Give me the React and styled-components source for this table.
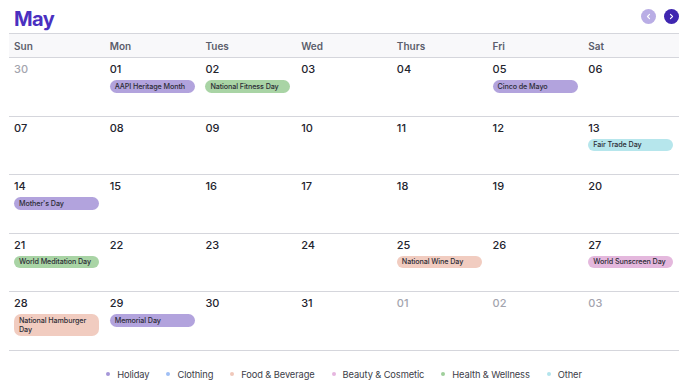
import React from "react";
import styled, { createGlobalStyle } from "styled-components";

const GlobalStyle = createGlobalStyle`
  body {
    margin: 0;
    background: #ffffff;
    font-family: Inter, "Noto Sans", sans-serif;
  }
`;

const colors = {
  holiday: "#b2a3dd",
  clothing: "#a9c6f3",
  food: "#f1ccc0",
  beauty: "#e4b8dd",
  health: "#a9d4a5",
  other: "#b6e6ec",
};

const legend = [
  { key: "holiday", label: "Holiday", dot: "#a596d8" },
  { key: "clothing", label: "Clothing", dot: "#9fbff5" },
  { key: "food", label: "Food & Beverage", dot: "#f0c8ba" },
  { key: "beauty", label: "Beauty & Cosmetic", dot: "#e6b6df" },
  { key: "health", label: "Health & Wellness", dot: "#9fcf9b" },
  { key: "other", label: "Other", dot: "#b3e4ec" },
];

const days = ["Sun", "Mon", "Tues", "Wed", "Thurs", "Fri", "Sat"];

// each day: [number, dimmed?, events]
const weeks = [
  [
    ["30", true],
    ["01", false, [["AAPI Heritage Month", "holiday"]]],
    ["02", false, [["National Fitness Day", "health"]]],
    ["03"],
    ["04"],
    ["05", false, [["Cinco de Mayo", "holiday"]]],
    ["06"],
  ],
  [
    ["07"],
    ["08"],
    ["09"],
    ["10"],
    ["11"],
    ["12"],
    ["13", false, [["Fair Trade Day", "other"]]],
  ],
  [
    ["14", false, [["Mother's Day", "holiday"]]],
    ["15"],
    ["16"],
    ["17"],
    ["18"],
    ["19"],
    ["20"],
  ],
  [
    ["21", false, [["World Meditation Day", "health"]]],
    ["22"],
    ["23"],
    ["24"],
    ["25", false, [["National Wine Day", "food"]]],
    ["26"],
    ["27", false, [["World Sunscreen Day", "beauty"]]],
  ],
  [
    ["28", false, [["National Hamburger Day", "food"]]],
    ["29", false, [["Memorial Day", "holiday"]]],
    ["30"],
    ["31"],
    ["01", true],
    ["02", true],
    ["03", true],
  ],
];

function Chevron({ dir }) {
  return (
    <svg width="7" height="7" viewBox="0 0 10 10">
      <path
        d={dir === "left" ? "M6.5 2 L3.5 5 L6.5 8" : "M3.5 2 L6.5 5 L3.5 8"}
        fill="none"
        stroke="#fff"
        strokeWidth="1.6"
        strokeLinecap="round"
        strokeLinejoin="round"
      />
    </svg>
  );
}

export default function App() {
  return (
    <Page>
      <GlobalStyle />
      <TopBar>
        <Title>May</Title>
        <Nav>
          <NavButton faded>
            <Chevron dir="left" />
          </NavButton>
          <NavButton>
            <Chevron dir="right" />
          </NavButton>
        </Nav>
      </TopBar>
      <Grid>
        {days.map((d) => (
          <HeadCell key={d}>{d}</HeadCell>
        ))}
        {weeks.map((week, wi) =>
          week.map(([num, dim, events], di) => (
            <DayCell key={`${wi}-${di}`}>
              <DayNum dim={dim}>{num}</DayNum>
              {events &&
                events.map(([label, type]) => (
                  <Pill key={label} color={colors[type]}>
                    {label}
                  </Pill>
                ))}
            </DayCell>
          ))
        )}
      </Grid>
      <Legend>
        {legend.map((l) => (
          <LegendItem key={l.key}>
            <Dot color={l.dot} />
            {l.label}
          </LegendItem>
        ))}
      </Legend>
    </Page>
  );
}

const Page = styled.div`
  width: 690px;
  height: 387px;
  padding: 0 11px 0 9px;
  box-sizing: border-box;
  display: flex;
  flex-direction: column;
`;

const TopBar = styled.div`
  height: 33px;
  display: flex;
  align-items: center;
  justify-content: space-between;
`;

const Title = styled.h1`
  margin: 0 0 0 5px;
  font-size: 20px;
  font-weight: 700;
  color: #4a30c0;
  letter-spacing: -0.6px;
  line-height: 1;
  padding-top: 4px;
`;

const Nav = styled.div`
  display: flex;
  gap: 8px;
`;

const NavButton = styled.div`
  width: 15px;
  height: 15px;
  border-radius: 50%;
  background: ${(p) => (p.faded ? "#b9ade5" : "#3f26b0")};
  display: flex;
  align-items: center;
  justify-content: center;
`;

const Grid = styled.div`
  display: grid;
  grid-template-columns: repeat(7, 1fr);
  grid-template-rows: 24px repeat(5, 58.5px);
  border-top: 1.5px solid #d5d6dc;
`;

const HeadCell = styled.div`
  background: #f8f8fa;
  border-bottom: 1.5px solid #d5d6dc;
  display: flex;
  align-items: center;
  padding-left: 5px;
  font-size: 10px;
  font-weight: 600;
  color: #5b5d6b;
`;

const DayCell = styled.div`
  border-bottom: 1.5px solid #d5d6dc;
  padding: 5px 5px 0 5px;
  display: flex;
  flex-direction: column;
  align-items: flex-start;
  gap: 4px;
`;

const DayNum = styled.div`
  font-size: 11px;
  font-weight: 500;
  line-height: 13px;
  color: ${(p) => (p.dim ? "#a3a4ae" : "#23242e")};
`;

const Pill = styled.div`
  width: 85px;
  box-sizing: border-box;
  background: ${(p) => p.color};
  border-radius: 7px;
  padding: 1.5px 5px;
  font-size: 7.2px;
  font-weight: 500;
  letter-spacing: -0.1px;
  line-height: 9.5px;
  color: #2c2c36;
`;

const Legend = styled.div`
  flex: 1;
  display: flex;
  justify-content: center;
  align-items: center;
  gap: 17px;
  padding-top: 11px;
`;

const LegendItem = styled.div`
  display: flex;
  align-items: center;
  gap: 7px;
  font-size: 9.3px;
  letter-spacing: -0.1px;
  color: #3c3d48;
`;

const Dot = styled.span`
  width: 4px;
  height: 4px;
  border-radius: 50%;
  background: ${(p) => p.color};
`;
